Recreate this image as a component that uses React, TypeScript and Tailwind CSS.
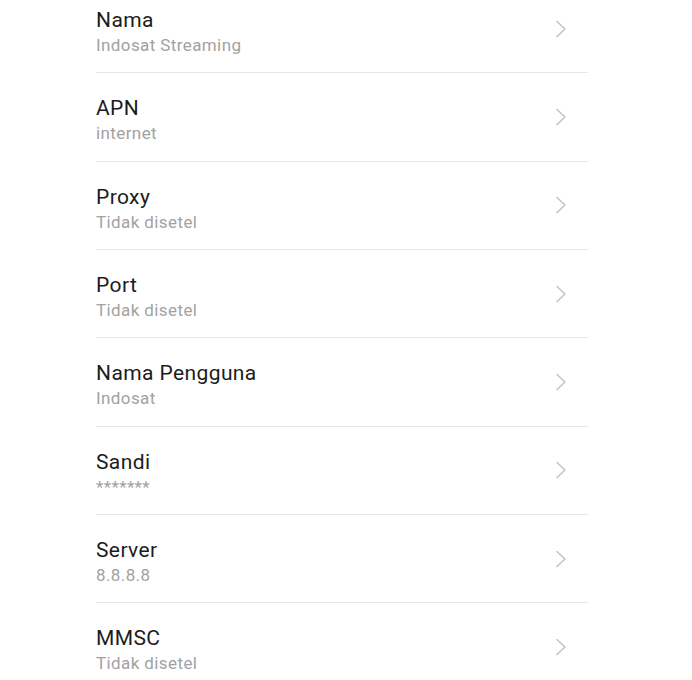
const rows = [
  { title: "Nama", value: "Indosat Streaming" },
  { title: "APN", value: "internet" },
  { title: "Proxy", value: "Tidak disetel" },
  { title: "Port", value: "Tidak disetel" },
  { title: "Nama Pengguna", value: "Indosat" },
  { title: "Sandi", value: "*******" },
  { title: "Server", value: "8.8.8.8" },
  { title: "MMSC", value: "Tidak disetel" },
];

function Chevron() {
  return (
    <svg width="12" height="18" viewBox="0 0 12 18" fill="none" className="shrink-0">
      <polyline
        points="2,1.5 10,9 2,16.5"
        stroke="#c4c4c4"
        strokeWidth="1.6"
        strokeLinecap="round"
        strokeLinejoin="round"
      />
    </svg>
  );
}

export default function App() {
  return (
    <div className="w-[692px] h-[680px] overflow-hidden bg-white font-['Roboto',sans-serif]">
      <div className="-mt-[15px] px-[96px] pr-[104px]">
        {rows.map((row, i) => (
          <div
            key={i}
            className="h-[88.33px] flex items-center justify-between border-b border-[#e6e6e6]"
          >
            <div className="flex flex-col self-start pt-[22px]">
              <span className="text-[21px] leading-[26px] tracking-[0.4px] text-[#1c1c1c]">
                {row.title}
              </span>
              <span className="text-[17px] leading-[24px] tracking-[0.4px] text-[#a2a2a2]">
                {row.value}
              </span>
            </div>
            <div className="pr-[21px]">
              <Chevron />
            </div>
          </div>
        ))}
      </div>
    </div>
  );
}
